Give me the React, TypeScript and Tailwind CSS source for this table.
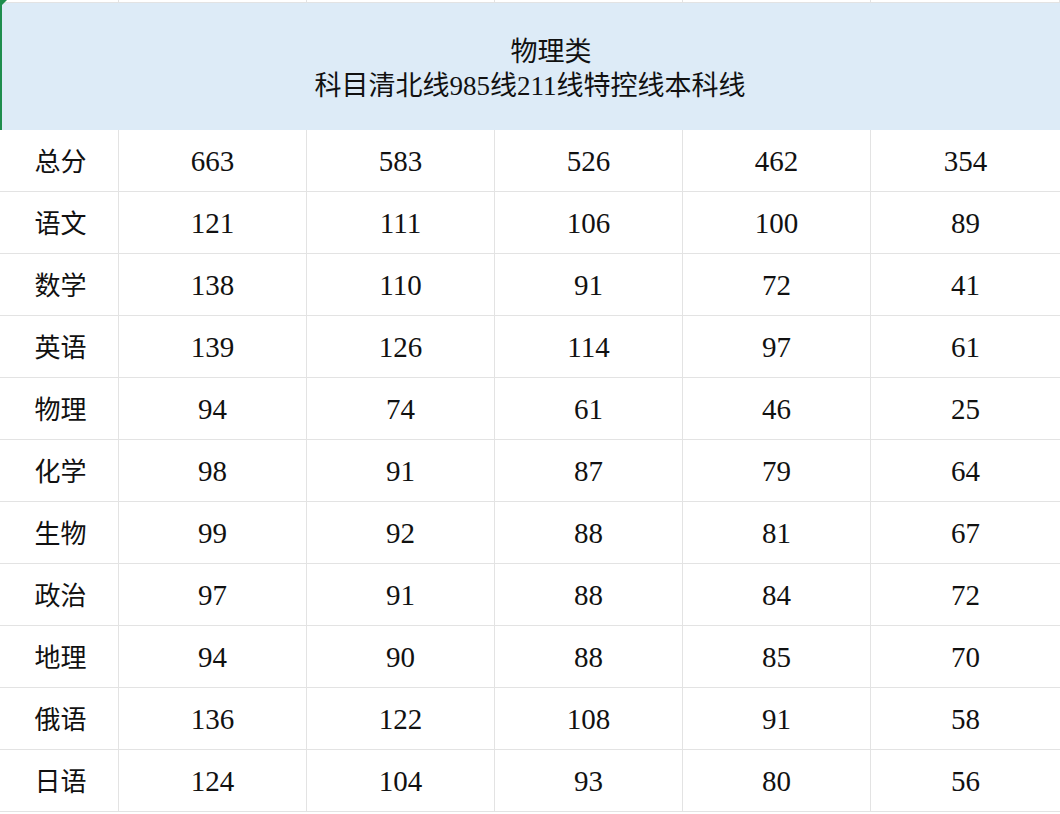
const cols = ['w-[119px]', 'w-[188px]', 'w-[188px]', 'w-[188px]', 'w-[188px]', 'flex-1'];

const rows: [string, number[]][] = [
  ['总分', [663, 583, 526, 462, 354]],
  ['语文', [121, 111, 106, 100, 89]],
  ['数学', [138, 110, 91, 72, 41]],
  ['英语', [139, 126, 114, 97, 61]],
  ['物理', [94, 74, 61, 46, 25]],
  ['化学', [98, 91, 87, 79, 64]],
  ['生物', [99, 92, 88, 81, 67]],
  ['政治', [97, 91, 88, 84, 72]],
  ['地理', [94, 90, 88, 85, 70]],
  ['俄语', [136, 122, 108, 91, 58]],
  ['日语', [124, 104, 93, 80, 56]],
];

export default function App() {
  return (
    <div
      className="w-[1060px] h-[814px] bg-white overflow-hidden text-[28px] text-[#111]"
      style={{ fontFamily: '"Liberation Serif", "Noto Sans CJK SC", serif' }}
    >
      {/* top strip of previous row */}
      <div className="flex h-[3px] border-b border-[#e3e3e3]">
        {cols.map((c, i) => (
          <div key={i} className={`${c} shrink-0 border-r border-[#e3e3e3]`} />
        ))}
      </div>

      {/* merged header */}
      <div className="relative h-[127px] bg-[#ddebf7] flex flex-col items-center justify-center leading-[34px] pt-[4px] text-[27px]">
        <div className="absolute left-0 top-[-3px] h-[130px] w-[2px] bg-[#1e8e4e]" />
        <div className="absolute left-0 top-[-3px] w-0 h-0 border-t-[7px] border-t-[#1e8e4e] border-r-[7px] border-r-transparent" />
        <div className="pl-[42px]">物理类</div>
        <div>科目清北线985线211线特控线本科线</div>
      </div>

      {rows.map(([name, vals]) => (
        <div key={name} className="flex h-[62px] border-b border-[#e3e3e3]">
          <div className={`${cols[0]} shrink-0 border-r border-[#e3e3e3] flex items-center justify-center pt-[3px] pl-[3px] text-[26px]`}>
            {name}
          </div>
          {vals.map((v, i) => (
            <div
              key={i}
              className={`${cols[i + 1]} shrink-0 ${i < 4 ? 'border-r' : ''} border-[#e3e3e3] flex items-center justify-center pt-[3px] text-[29px]`}
            >
              {v}
            </div>
          ))}
        </div>
      ))}
    </div>
  );
}
